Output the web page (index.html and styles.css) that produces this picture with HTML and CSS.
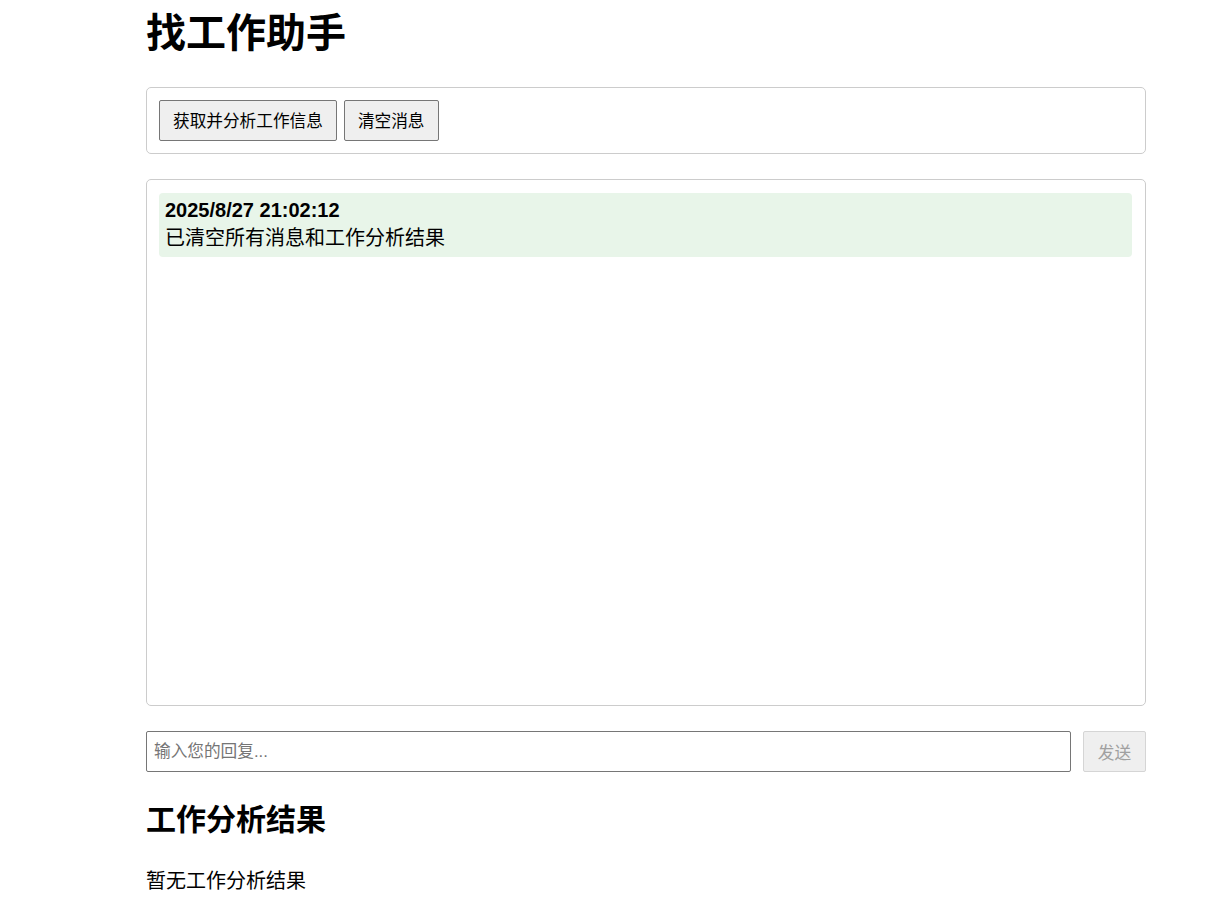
FILE: index.html
```html
<!DOCTYPE html>
<html lang="zh-CN">
<head>
<meta charset="utf-8">
<title>找工作助手</title>
<link rel="stylesheet" href="styles.css">
</head>
<body>
<div class="container">
  <h1 class="title">找工作助手</h1>
  <div class="panel">
    <button class="btn">获取并分析工作信息</button>
    <button class="btn">清空消息</button>
  </div>
  <div class="messages">
    <div class="message">
      <div class="msg-time">2025/8/27 21:02:12</div>
      <div class="msg-text">已清空所有消息和工作分析结果</div>
    </div>
  </div>
  <div class="input-row">
    <input class="reply-input" type="text" placeholder="输入您的回复...">
    <button class="send-btn" disabled>发送</button>
  </div>
  <h2 class="section-title">工作分析结果</h2>
  <p class="empty">暂无工作分析结果</p>
</div>
</body>
</html>
```

FILE: styles.css
```css
html, body {
  margin: 0;
  padding: 0;
  background: #ffffff;
}

body {
  font-family: "Liberation Sans", "Noto Sans CJK SC", sans-serif;
  color: #000000;
  font-size: 20px;
}

.container {
  width: 1000px;
  margin-left: 146px;
  padding-top: 10px;
}

.title {
  font-size: 40px;
  line-height: 46px;
  font-weight: bold;
  margin: 0 0 31px 0;
}

.panel {
  border: 1px solid #cccccc;
  border-radius: 5px;
  padding: 12px;
  display: flex;
  gap: 7px;
  margin-bottom: 25px;
}

.btn {
  font-family: "Liberation Sans", "Noto Sans CJK SC", sans-serif;
  font-size: 16.67px;
  height: 41px;
  padding: 4px 13px 0 13px;
  background: #efefef;
  border: 1px solid #767676;
  border-radius: 2px;
  color: #000000;
  line-height: 1;
}

.messages {
  border: 1px solid #cccccc;
  border-radius: 5px;
  height: 500px;
  padding: 13px 13px 12px 12px;
  margin-bottom: 25px;
}

.message {
  background: #e8f5e9;
  border-radius: 4px;
  padding: 6px 6px 4px 6px;
}

.msg-time {
  font-weight: bold;
  line-height: 23px;
}

.msg-text {
  line-height: 29px;
  margin-top: 2px;
}

.input-row {
  display: flex;
  gap: 12px;
  margin-bottom: 30px;
}

.reply-input {
  flex: 1;
  height: 41px;
  box-sizing: border-box;
  border: 1px solid #767676;
  border-radius: 2px;
  padding: 0 7px;
  font-family: "Liberation Sans", "Noto Sans CJK SC", sans-serif;
  font-size: 16.67px;
  color: #000;
  margin: 0;
}

.reply-input::placeholder {
  color: #757575;
}

.send-btn {
  height: 41px;
  width: 63px;
  padding: 0;
  font-family: "Liberation Sans", "Noto Sans CJK SC", sans-serif;
  font-size: 16.67px;
  background: #efefef;
  border: 1px solid #d5d5d5;
  border-radius: 2px;
  color: #a0a0a0;
}

.section-title {
  font-size: 30px;
  line-height: 35px;
  font-weight: bold;
  margin: 0 0 33px 0;
}

.empty {
  margin: 0;
  line-height: 23px;
}
```
